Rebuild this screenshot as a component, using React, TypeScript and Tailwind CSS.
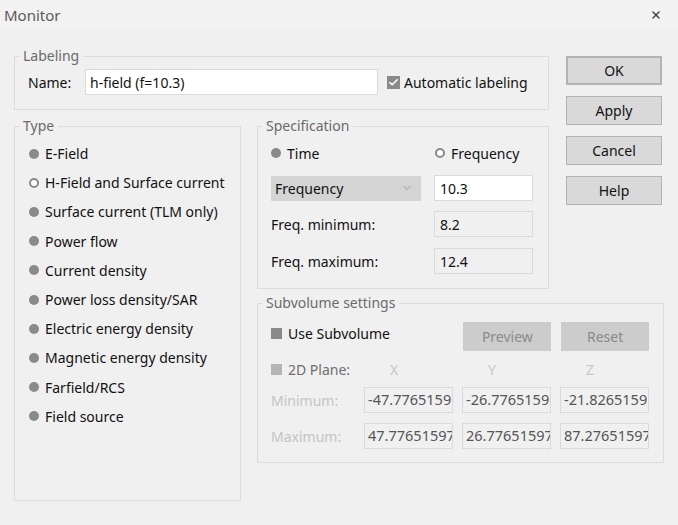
import { X, ChevronDown, Check } from "lucide-react";

const types = [
  "E-Field",
  "H-Field and Surface current",
  "Surface current (TLM only)",
  "Power flow",
  "Current density",
  "Power loss density/SAR",
  "Electric energy density",
  "Magnetic energy density",
  "Farfield/RCS",
  "Field source",
];

function Radio({ checked }: { checked?: boolean }) {
  return checked ? (
    <span className="h-[10px] w-[10px] shrink-0 rounded-full border-[2.5px] border-[#8a8a8a] bg-white" />
  ) : (
    <span className="h-[10px] w-[10px] shrink-0 rounded-full bg-[#8a8a8a]" />
  );
}

function Group({
  title,
  className,
  children,
}: {
  title: string;
  className?: string;
  children: React.ReactNode;
}) {
  return (
    <fieldset className={"min-w-0 border border-[#dcdcdc] " + (className ?? "")}>
      <legend className="ml-[4px] px-[4px] text-[14px] leading-[20px] text-[#6b6b6b]">
        {title}
      </legend>
      {children}
    </fieldset>
  );
}

function Btn({ label, main }: { label: string; main?: boolean }) {
  return (
    <button
      className={
        "flex h-[29px] w-[96px] items-center justify-center bg-[#d9d9d9] text-[14px] text-[#111] " +
        (main ? "border-2 border-[#b3b3b3]" : "border border-[#b3b3b3]")
      }
    >
      {label}
    </button>
  );
}

const numBox =
  "flex h-[26px] w-[89px] items-center overflow-hidden whitespace-nowrap border border-[#dadada] bg-[#f0f0f0] px-[3px] text-[14.5px] text-[#555]";

export default function App() {
  return (
    <div
      className="h-[525px] w-[678px] bg-[#f0f0f0] text-[#111]"
      style={{ fontFamily: '"Noto Sans", "Liberation Sans", sans-serif' }}
    >
      <div className="flex h-[30px] items-center justify-between bg-[#f2f2f2] pl-[4px] pr-[16px]">
        <span className="text-[15px] text-[#5a5a5a]">Monitor</span>
        <X className="h-[12px] w-[12px] text-[#444]" strokeWidth={3} />
      </div>

      <div className="grid grid-cols-[227px_16px_292px_17px_98px] grid-rows-[64px_179px_auto] pl-[14px] pt-[16px]">
        {/* Labeling */}
        <Group title="Labeling" className="col-span-3 h-[64px]">
          <div className="flex items-center pl-[13px] pt-[3px]">
            <span className="w-[57px] text-[14px]">Name:</span>
            <div className="flex h-[26px] w-[293px] items-center border border-[#dadada] bg-white px-[4px] text-[14px]">
              h-field (f=10.3)
            </div>
            <span className="ml-[9px] flex h-[13px] w-[13px] items-center justify-center bg-[#8a8a8a]">
              <Check className="h-[11px] w-[11px] text-white" strokeWidth={3.5} />
            </span>
            <span className="ml-[4px] text-[14px]">Automatic labeling</span>
          </div>
        </Group>

        {/* Buttons */}
        <div className="col-start-5 row-span-2 row-start-1 flex flex-col gap-[11px] self-start pt-[10px]">
          <Btn label="OK" main />
          <Btn label="Apply" />
          <Btn label="Cancel" />
          <Btn label="Help" />
        </div>

        {/* Type */}
        <Group title="Type" className="col-start-1 row-span-2 row-start-2 mt-[6px] h-[385px] self-start">
          <div className="flex flex-col pl-[14px] pt-[3px]">
            {types.map((t, i) => (
              <div key={t} className="flex h-[29.2px] items-center gap-[6px] text-[14px]">
                <Radio checked={i === 1} />
                <span>{t}</span>
              </div>
            ))}
          </div>
        </Group>

        {/* Specification */}
        <Group title="Specification" className="col-start-3 row-start-2 mt-[6px] h-[173px]">
          <div className="flex flex-col pl-[13px] pr-[15px] text-[14px]">
            <div className="flex h-[27px] items-center pt-[7px]">
              <div className="flex w-[164px] items-center gap-[6px]">
                <Radio />
                <span>Time</span>
              </div>
              <div className="flex items-center gap-[6px]">
                <Radio checked />
                <span>Frequency</span>
              </div>
            </div>
            <div className="mt-[12px] flex items-center justify-between">
              <div className="flex h-[25px] w-[150px] items-center justify-between bg-[#d4d4d4] pl-[4px] pr-[8px]">
                <span>Frequency</span>
                <ChevronDown className="h-[12px] w-[12px] text-[#9a9a9a]" strokeWidth={2} />
              </div>
              <div className="flex h-[26px] w-[99px] items-center border border-[#dadada] bg-white px-[5px]">
                10.3
              </div>
            </div>
            <div className="mt-[10px] flex items-center justify-between">
              <span>Freq. minimum:</span>
              <div className="flex h-[26px] w-[99px] items-center border border-[#dadada] bg-[#f0f0f0] px-[5px]">
                8.2
              </div>
            </div>
            <div className="mt-[11px] flex items-center justify-between">
              <span>Freq. maximum:</span>
              <div className="flex h-[26px] w-[99px] items-center border border-[#dadada] bg-[#f0f0f0] px-[5px]">
                12.4
              </div>
            </div>
          </div>
        </Group>

        {/* Subvolume settings */}
        <Group title="Subvolume settings" className="col-span-3 col-start-3 row-start-3 mt-[4px] h-[170px] self-start">
          <div className="flex flex-col pl-[13px] pr-[14px] text-[14px]">
            <div className="flex items-start pt-[9px]">
              <div className="flex h-[22px] w-[193px] items-center gap-[6px]">
                <span className="h-[11px] w-[11px] bg-[#8a8a8a]" />
                <span>Use Subvolume</span>
              </div>
              <div className="flex h-[29px] w-[88px] items-center justify-center bg-[#cccccc] text-[#8a8a8a]">
                Preview
              </div>
              <div className="ml-[10px] flex h-[29px] w-[88px] items-center justify-center bg-[#cccccc] text-[#8a8a8a]">
                Reset
              </div>
            </div>
            <div className="mt-[6px] flex h-[24px] items-center">
              <div className="flex w-[94px] items-center gap-[6px] text-[#6e6e6e]">
                <span className="h-[11px] w-[11px] bg-[#b5b5b5]" />
                <span>2D Plane:</span>
              </div>
              <span className="w-[98px] pl-[25px] text-[#c8c8c8]">X</span>
              <span className="w-[98px] pl-[25px] text-[#c8c8c8]">Y</span>
              <span className="pl-[25px] text-[#c8c8c8]">Z</span>
            </div>
            <div className="mt-[6px] flex items-center">
              <span className="w-[94px] text-[#c4c4c4]">Minimum:</span>
              <div className="flex gap-[9px]">
                <div className={numBox}>-47.7765159</div>
                <div className={numBox}>-26.7765159</div>
                <div className={numBox}>-21.8265159</div>
              </div>
            </div>
            <div className="mt-[10px] flex items-center">
              <span className="w-[94px] text-[#c4c4c4]">Maximum:</span>
              <div className="flex gap-[9px]">
                <div className={numBox}>47.77651597</div>
                <div className={numBox}>26.77651597</div>
                <div className={numBox}>87.27651597</div>
              </div>
            </div>
          </div>
        </Group>
      </div>
    </div>
  );
}
